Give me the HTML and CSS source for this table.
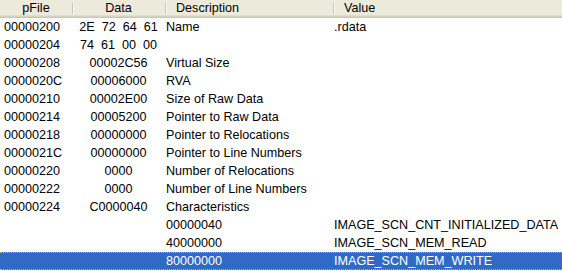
FILE: index.html
```html
<!DOCTYPE html>
<html>
<head>
<meta charset="utf-8">
<link rel="stylesheet" href="styles.css">
</head>
<body>
<div class="list">
  <div class="head">
    <div class="hc c-center">pFile</div>
    <div class="hc c-center sep">Data</div>
    <div class="hc c-left sep">Description</div>
    <div class="hc c-left sep">Value</div>
  </div>
  <div class="row"><div class="c1">00000200</div><div class="c2">2E&nbsp;&nbsp;72&nbsp;&nbsp;64&nbsp;&nbsp;61</div><div class="c3">Name</div><div class="c4">.rdata</div></div>
  <div class="row"><div class="c1">00000204</div><div class="c2">74&nbsp;&nbsp;61&nbsp;&nbsp;00&nbsp;&nbsp;00</div><div class="c3"></div><div class="c4"></div></div>
  <div class="row"><div class="c1">00000208</div><div class="c2">00002C56</div><div class="c3">Virtual Size</div><div class="c4"></div></div>
  <div class="row"><div class="c1">0000020C</div><div class="c2">00006000</div><div class="c3">RVA</div><div class="c4"></div></div>
  <div class="row"><div class="c1">00000210</div><div class="c2">00002E00</div><div class="c3">Size of Raw Data</div><div class="c4"></div></div>
  <div class="row"><div class="c1">00000214</div><div class="c2">00005200</div><div class="c3">Pointer to Raw Data</div><div class="c4"></div></div>
  <div class="row"><div class="c1">00000218</div><div class="c2">00000000</div><div class="c3">Pointer to Relocations</div><div class="c4"></div></div>
  <div class="row"><div class="c1">0000021C</div><div class="c2">00000000</div><div class="c3">Pointer to Line Numbers</div><div class="c4"></div></div>
  <div class="row"><div class="c1">00000220</div><div class="c2">0000</div><div class="c3">Number of Relocations</div><div class="c4"></div></div>
  <div class="row"><div class="c1">00000222</div><div class="c2">0000</div><div class="c3">Number of Line Numbers</div><div class="c4"></div></div>
  <div class="row"><div class="c1">00000224</div><div class="c2">C0000040</div><div class="c3">Characteristics</div><div class="c4"></div></div>
  <div class="row"><div class="c1"></div><div class="c2"></div><div class="c3">00000040</div><div class="c4">IMAGE_SCN_CNT_INITIALIZED_DATA</div></div>
  <div class="row"><div class="c1"></div><div class="c2"></div><div class="c3">40000000</div><div class="c4">IMAGE_SCN_MEM_READ</div></div>
  <div class="row selected"><div class="c1"></div><div class="c2"></div><div class="c3">80000000</div><div class="c4">IMAGE_SCN_MEM_WRITE</div></div>
</div>
</body>
</html>
```
FILE: styles.css
```css
html, body {
  margin: 0;
  padding: 0;
  background: #ffffff;
}
body {
  font-family: "Liberation Sans", Arial, sans-serif;
  font-size: 12.6px;
  color: #000000;
  width: 562px;
  height: 271px;
  overflow: hidden;
}
.list {
  display: flex;
  flex-direction: column;
}
.head, .row {
  display: grid;
  grid-template-columns: 72px 93px 168px 1fr;
}
.head {
  height: 18px;
  background: #ebeadb;
  box-shadow: inset 0 -1px 0 #cbc7b8, inset 0 -2px 0 #d6d2c2, inset 0 -3px 0 #e2decd;
}
.hc {
  position: relative;
  line-height: 17px;
  white-space: nowrap;
}
.c-center { text-align: center; }
.c-left { padding-left: 11px; }
.sep::before {
  content: "";
  position: absolute;
  left: 0;
  top: 3px;
  height: 11px;
  width: 1px;
  background: #c7c5b2;
  box-shadow: 1px 0 0 #ffffff;
}
.row {
  height: 18px;
  line-height: 18px;
  white-space: nowrap;
}
.c1 { padding-left: 4px; }
.c2 { text-align: center; }
.c3 { padding-left: 1px; }
.c4 { padding-left: 1px; }
.selected {
  background: #316ac5;
  color: #ffffff;
  box-sizing: border-box;
  border-top: 1px dotted #d8a850;
  border-bottom: 1px dotted #d8a850;
  line-height: 16px;
}
```
